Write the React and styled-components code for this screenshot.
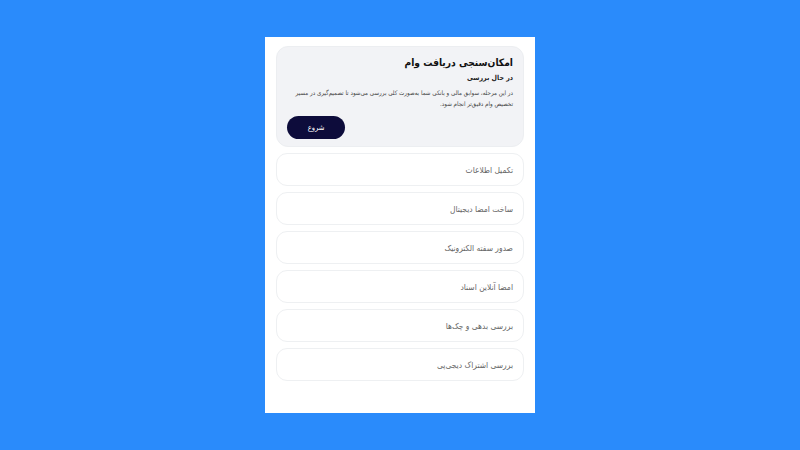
import styled, { createGlobalStyle } from "styled-components";

const GlobalStyle = createGlobalStyle`
  html, body {
    margin: 0;
    padding: 0;
    background: #2a8bfb;
  }
  body {
    font-family: "DejaVu Sans Condensed", "DejaVu Sans", sans-serif;
    font-stretch: condensed;
  }
`;

const steps = [
  "تکمیل اطلاعات",
  "ساخت امضا دیجیتال",
  "صدور سفته الکترونیک",
  "امضا آنلاین اسناد",
  "بررسی بدهی و چک‌ها",
  "بررسی اشتراک دیجی‌پی",
];

const App = () => {
  return (
    <>
      <GlobalStyle />
      <Page>
        <Panel dir="rtl">
          <ActiveCard>
            <Title>امکان‌سنجی دریافت وام</Title>
            <Status>در حال بررسی</Status>
            <Desc>
              در این مرحله، سوابق مالی و بانکی شما به‌صورت کلی بررسی می‌شود تا
              تصمیم‌گیری در مسیر تخصیص وام دقیق‌تر انجام شود.
            </Desc>
            <StartButton>شروع</StartButton>
          </ActiveCard>
          {steps.map((s) => (
            <StepCard key={s}>{s}</StepCard>
          ))}
        </Panel>
      </Page>
    </>
  );
};

export default App;

const Page = styled.div`
  width: 800px;
  height: 450px;
  display: flex;
  justify-content: center;
  padding-top: 37px;
  box-sizing: border-box;
`;

const Panel = styled.div`
  width: 270px;
  height: 376px;
  background: #ffffff;
  box-sizing: border-box;
  padding: 9px 11px;
  display: flex;
  flex-direction: column;
  gap: 6px;
`;

const ActiveCard = styled.div`
  background: #f2f3f6;
  border: 1px solid #eceef1;
  border-radius: 12px;
  padding: 10px 10px 7px 10px;
  display: flex;
  flex-direction: column;
  flex-shrink: 0;
`;

const Title = styled.div`
  font-size: 10.2px;
  line-height: 12px;
  font-weight: bold;
  color: #111;
`;

const Status = styled.div`
  font-size: 7px;
  line-height: 9px;
  font-weight: bold;
  color: #222;
  margin-top: 4.5px;
`;

const Desc = styled.div`
  font-size: 6.2px;
  line-height: 11px;
  color: #444;
  margin-top: 4px;
`;

const StartButton = styled.button`
  align-self: flex-end;
  flex-shrink: 0;
  margin-top: 7.5px;
  width: 58px;
  height: 23px;
  padding: 0;
  border: none;
  border-radius: 12px;
  background: #0d0c3b;
  color: #fff;
  font-family: inherit;
  font-stretch: condensed;
  font-size: 7.5px;
`;

const StepCard = styled.div`
  height: 33px;
  flex-shrink: 0;
  box-sizing: border-box;
  border: 1px solid #eef0f2;
  border-radius: 11px;
  display: flex;
  align-items: center;
  padding: 0 10px;
  font-size: 8.4px;
  color: #666;
  background: #fff;
`;
